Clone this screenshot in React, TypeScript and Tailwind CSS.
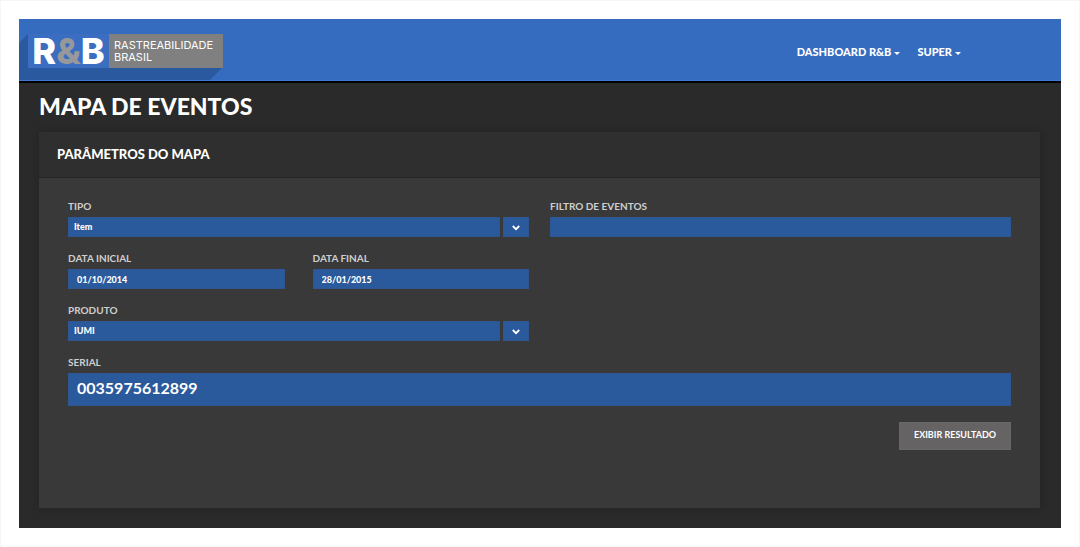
import type { ReactNode } from 'react';

const fieldClass =
  'block w-full rounded-none border border-[#2d5692] bg-[#2a599c] px-2 text-white outline-none focus:border-[#5b8ad0]';

function Field({ id, label, children }: { id: string; label: string; children: ReactNode }) {
  return (
    <div>
      <label htmlFor={id} className="mb-[3px] block text-[10px] leading-4 font-bold text-[#cfcfcf] uppercase">
        {label}
      </label>
      {children}
    </div>
  );
}

function SelectBox({ id, options }: { id: string; options: string[] }) {
  return (
    <div className="grid grid-cols-[1fr_26px] gap-[3px]">
      <span className="col-start-1 row-start-1 border border-[#2d5692] bg-[#2a599c]" />
      <span className="col-start-2 row-start-1 flex items-center justify-center border border-[#2d5692] bg-[#2a599c]">
        <svg viewBox="0 0 8 6" className="mt-px h-[6px] w-2" fill="none" stroke="#fff" strokeWidth="1.8" aria-hidden="true">
          <path d="M0.8 1 4 4.2 7.2 1" />
        </svg>
      </span>
      <select
        id={id}
        className="col-span-2 col-start-1 row-start-1 h-5 w-full appearance-none bg-transparent px-1.5 text-[9px] font-black text-white outline-none"
      >
        {options.map((option) => (
          <option key={option} className="bg-[#2a599c]">
            {option}
          </option>
        ))}
      </select>
    </div>
  );
}

function Logo() {
  return (
    <a href="#inicio" className="relative flex h-full pt-[15px] pl-[9px]" aria-label="R&B Rastreabilidade Brasil">
      <svg viewBox="0 0 204 61" className="absolute top-0 left-0 h-[61px] w-[204px]" aria-hidden="true">
        <path d="M9 15 0 24V61H191L204 48V15Z" fill="#2b599f" />
      </svg>
      <span className="relative flex h-[34px] w-[81px] items-center justify-center bg-[#3b6dc1] font-['Inter'] text-[36px] leading-none font-extrabold text-white">
        R<span className="text-[#96989c]">&amp;</span>B
      </span>
      <span className="relative flex h-[34px] w-[114px] flex-col justify-center bg-[#808080] pl-[5px] font-['Inter'] text-[11px] leading-3 text-white">
        <span>RASTREABILIDADE</span>
        <span>BRASIL</span>
      </span>
    </a>
  );
}

function MenuLink({ href, children }: { href: string; children: ReactNode }) {
  return (
    <a href={href} className="flex items-center gap-[3px]">
      {children}
      <svg viewBox="0 0 6 3" className="mt-0.5 h-[3px] w-[6px]" fill="#fff" aria-hidden="true">
        <path d="M0 0H6L3 3Z" />
      </svg>
    </a>
  );
}

export default function App() {
  return (
    <div className="border border-[#f6f6f6] bg-white p-[18px] font-['Lato',sans-serif]">
      <div className="bg-[#2a2a2a] pb-5">
        <header className="flex h-16 items-start justify-between border-b-2 border-black bg-[#356cc0] shadow-[inset_0_-1px_0_#3d79d2]">
          <Logo />
          <nav className="mt-6 mr-[100px] flex gap-[17px] text-[11px] leading-[18px] font-black text-white">
            <MenuLink href="#dashboard">DASHBOARD R&amp;B</MenuLink>
            <MenuLink href="#super">SUPER</MenuLink>
          </nav>
        </header>
        <main className="px-5">
          <h1 className="pt-[7px] pb-[10px] text-[23px] leading-8 font-black text-white">MAPA DE EVENTOS</h1>
          <section className="mr-px bg-[#393939] shadow-[0_0_8px_rgba(0,0,0,0.2)]">
            <h2 className="border-b border-[#252525] bg-[#2f2f2f] px-[18px] pt-3 pb-[13px] text-[13px] leading-5 font-black text-white">
              PARÂMETROS DO MAPA
            </h2>
            <form className="grid grid-cols-2 gap-x-[21px] gap-y-[13px] px-[29px] pt-5 pb-[58px]" onSubmit={(e) => e.preventDefault()}>
              <Field id="tipo" label="Tipo">
                <SelectBox id="tipo" options={['Item']} />
              </Field>
              <Field id="filtro" label="Filtro de eventos">
                <input id="filtro" type="text" className={`${fieldClass} h-5 text-[9px] font-black`} />
              </Field>
              <div className="col-start-1 grid grid-cols-2 gap-x-7">
                <Field id="inicial" label="Data inicial">
                  <input id="inicial" type="text" defaultValue="01/10/2014" className={`${fieldClass} h-5 text-[9px] font-black`} />
                </Field>
                <Field id="final" label="Data final">
                  <input id="final" type="text" defaultValue="28/01/2015" className={`${fieldClass} h-5 text-[9px] font-black`} />
                </Field>
              </div>
              <div className="col-start-1">
                <Field id="produto" label="Produto">
                  <SelectBox id="produto" options={['IUMI']} />
                </Field>
              </div>
              <div className="col-span-2">
                <Field id="serial" label="Serial">
                  <input id="serial" type="text" defaultValue="0035975612899" className={`${fieldClass} h-[33px] pb-1 text-[16px] font-bold`} />
                </Field>
              </div>
              <button
                type="submit"
                className="col-span-2 mt-[3px] h-7 w-28 justify-self-end border border-[#686666] bg-[#656363] pb-0.5 text-[9px] font-bold text-white"
              >
                EXIBIR RESULTADO
              </button>
            </form>
          </section>
        </main>
      </div>
    </div>
  );
}
